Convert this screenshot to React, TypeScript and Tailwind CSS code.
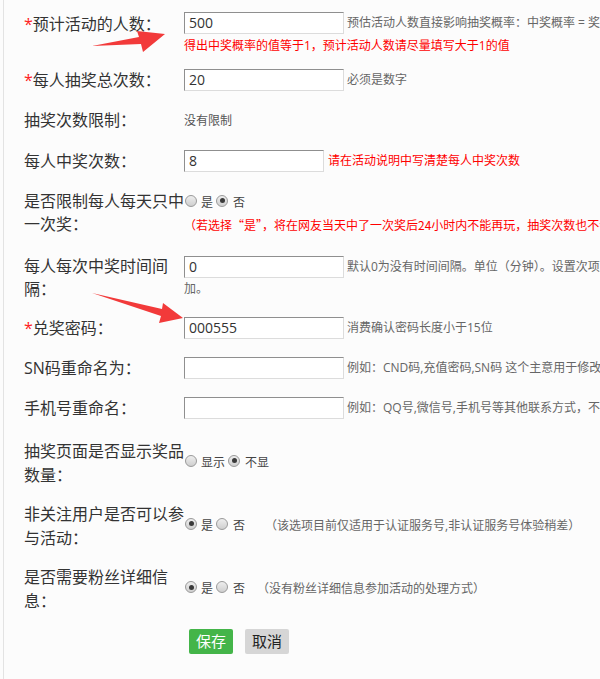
import React from "react";

const labelCls =
  "w-[160px] shrink-0 whitespace-nowrap text-[16px] text-[#333]";
const helpCls = "ml-[3px] whitespace-nowrap text-[12px] leading-[16px] text-[#666]";

function Input({ value, narrow }: { value?: string; narrow?: boolean }) {
  return (
    <div
      className={
        (narrow ? "w-[140px] " : "w-[160px] ") +
        "h-[22px] shrink-0 border border-t-[#8f8f8f] border-l-[#8f8f8f] border-r-[#dcdcdc] border-b-[#dcdcdc] bg-white pl-[4px] text-[14px] leading-[20px] text-[#333]"
      }
    >
      {value}
    </div>
  );
}

function Radio({ checked }: { checked?: boolean }) {
  return (
    <span className="mb-[4px] inline-flex h-[12px] w-[12px] shrink-0 items-center justify-center rounded-full border border-[#9a9a9a] bg-linear-to-b from-[#eeeeee] to-[#cfcfcf]">
      {checked ? <span className="h-[5px] w-[5px] rounded-full bg-[#3a3a3a]" /> : null}
    </span>
  );
}

function Star() {
  return <span className="text-[#f22]">*</span>;
}

export default function App() {
  return (
    <div className="relative h-[679px] w-[600px] overflow-hidden bg-[#fcfcfc] font-['Open_Sans','Noto_Sans_CJK_SC',sans-serif]">
      <div className="ml-[3px] h-full border-l border-[#e3e3e3] pl-[20px]">
        {/* Row 1 */}
        <div className="flex h-[60px] items-start pt-[12px]">
          <div className={labelCls + " pt-[0.5px] leading-[23px]"}>
            <Star />
            预计活动的人数：
          </div>
          <div className="flex flex-col">
            <div className="flex items-center">
              <Input value="500" />
              <span className={helpCls}>
                预估活动人数直接影响抽奖概率：中奖概率 = 奖品总数/(预估活动人数*每人抽奖次数)
              </span>
            </div>
            <div className="mt-[4px] whitespace-nowrap text-[12px] leading-[16px] text-[#f00]">
              得出中奖概率的值等于1，预计活动人数请尽量填写大于1的值
            </div>
          </div>
        </div>

        {/* Row 2 */}
        <div className="flex h-[40px] items-center">
          <div className={labelCls + " leading-[23px]"}>
            <Star />
            每人抽奖总次数：
          </div>
          <div className="flex items-center">
            <Input value="20" />
            <span className={helpCls}>必须是数字</span>
          </div>
        </div>

        {/* Row 3 */}
        <div className="flex h-[41px] items-center">
          <div className={labelCls + " leading-[23px]"}>抽奖次数限制：</div>
          <span className="whitespace-nowrap text-[12px] leading-[16px] text-[#555]">没有限制</span>
        </div>

        {/* Row 4 */}
        <div className="flex h-[40px] items-center">
          <div className={labelCls + " leading-[23px]"}>每人中奖次数：</div>
          <div className="flex items-center">
            <Input value="8" narrow />
            <span className="ml-[4px] whitespace-nowrap text-[12px] leading-[16px] text-[#f00]">
              请在活动说明中写清楚每人中奖次数
            </span>
          </div>
        </div>

        {/* Row 5 */}
        <div className="flex h-[64px] items-center">
          <div className={labelCls + " leading-[23px]"}>
            是否限制每人每天只中
            <br />
            一次奖：
          </div>
          <div className="flex flex-col">
            <div className="flex h-[23px] items-center text-[12px] text-[#444]">
              <span className="ml-[1px] flex items-center">
                <Radio />
              </span>
              <span className="ml-[4px]">是</span>
              <span className="ml-[3px] flex items-center">
                <Radio checked />
              </span>
              <span className="ml-[5px]">否</span>
            </div>
            <div className="flex h-[21px] items-center whitespace-nowrap font-['Noto_Sans_CJK_SC',sans-serif] text-[12px] text-[#f00]">
              （若选择“是”，将在网友当天中了一次奖后24小时内不能再玩，抽奖次数也不会增加）
            </div>
          </div>
        </div>

        {/* Row 6 */}
        <div className="flex h-[63px] items-start pt-[9.5px]">
          <div className={labelCls + " leading-[23px]"}>
            每人每次中奖时间间
            <br />
            隔：
          </div>
          <div className="mt-[1.5px] flex flex-col">
            <div className="flex items-center">
              <Input value="0" />
              <span className={helpCls}>
                默认0为没有时间间隔。单位（分钟）。设置次项后，每次中奖后需间隔相应时间才能再次参
              </span>
            </div>
            <div className="mt-[2.5px] text-[12px] leading-[16px] text-[#666]">加。</div>
          </div>
        </div>

        {/* Row 7 */}
        <div className="flex h-[40px] items-center">
          <div className={labelCls + " leading-[23px]"}>
            <Star />
            兑奖密码：
          </div>
          <div className="flex items-center">
            <Input value="000555" />
            <span className={helpCls}>消费确认密码长度小于15位</span>
          </div>
        </div>

        {/* Row 8 */}
        <div className="flex h-[40px] items-center">
          <div className={labelCls + " leading-[23px]"}>SN码重命名为：</div>
          <div className="flex items-center">
            <Input />
            <span className={helpCls}>例如：CND码,充值密码,SN码 这个主意用于修改SN码的显示名称</span>
          </div>
        </div>

        {/* Row 9 */}
        <div className="flex h-[40px] items-center">
          <div className={labelCls + " leading-[23px]"}>手机号重命名：</div>
          <div className="flex items-center">
            <Input />
            <span className={helpCls}>例如：QQ号,微信号,手机号等其他联系方式，不填写默认为手机号</span>
          </div>
        </div>

        {/* Row 10 */}
        <div className="flex h-[69px] items-center">
          <div className={labelCls + " leading-[24px]"}>
            抽奖页面是否显示奖品
            <br />
            数量：
          </div>
          <div className="flex items-center text-[12px] leading-[16px] text-[#444]">
            <span className="ml-[1px] flex items-center">
              <Radio />
            </span>
            <span className="ml-[4px]">显示</span>
            <span className="ml-[3px] flex items-center">
              <Radio checked />
            </span>
            <span className="ml-[5px]">不显</span>
          </div>
        </div>

        {/* Row 11 */}
        <div className="flex h-[57px] items-center">
          <div className={labelCls + " leading-[24px]"}>
            非关注用户是否可以参
            <br />
            与活动：
          </div>
          <div className="flex items-center whitespace-nowrap text-[12px] leading-[16px] text-[#444]">
            <span className="ml-[1px] flex items-center">
              <Radio checked />
            </span>
            <span className="ml-[4px]">是</span>
            <span className="ml-[3px] flex items-center">
              <Radio />
            </span>
            <span className="ml-[5px]">否</span>
            <span className="ml-[20px] text-[#666]">（该选项目前仅适用于认证服务号,非认证服务号体验稍差）</span>
          </div>
        </div>

        {/* Row 12 */}
        <div className="flex h-[70px] items-center">
          <div className={labelCls + " leading-[24px]"}>
            是否需要粉丝详细信
            <br />
            息：
          </div>
          <div className="flex items-center whitespace-nowrap text-[12px] leading-[16px] text-[#444]">
            <span className="ml-[1px] flex items-center">
              <Radio checked />
            </span>
            <span className="ml-[4px]">是</span>
            <span className="ml-[3px] flex items-center">
              <Radio />
            </span>
            <span className="ml-[5px]">否</span>
            <span className="ml-[12px] text-[#666]">（没有粉丝详细信息参加活动的处理方式）</span>
          </div>
        </div>

        {/* Buttons */}
        <div className="mt-[5px] flex gap-[12px] pl-[165px]">
          <button className="h-[25px] w-[44px] rounded-[2px] bg-[#44b549] text-[15px] leading-[25px] text-white">
            保存
          </button>
          <button className="h-[25px] w-[44px] rounded-[2px] bg-[#d6d6d6] text-[15px] leading-[25px] text-[#222]">
            取消
          </button>
        </div>
      </div>

      <svg
        className="pointer-events-none absolute left-0 top-0"
        width="600"
        height="679"
        viewBox="0 0 600 679"
      >
        <polygon
          points="92,46 139,37 137,31 165,34 143,52 141,44"
          fill="#f23a3a"
        />
        <polygon
          points="92,293 162,309 163,303 183,318 159,323 161,316"
          fill="#f23a3a"
        />
      </svg>
    </div>
  );
}
